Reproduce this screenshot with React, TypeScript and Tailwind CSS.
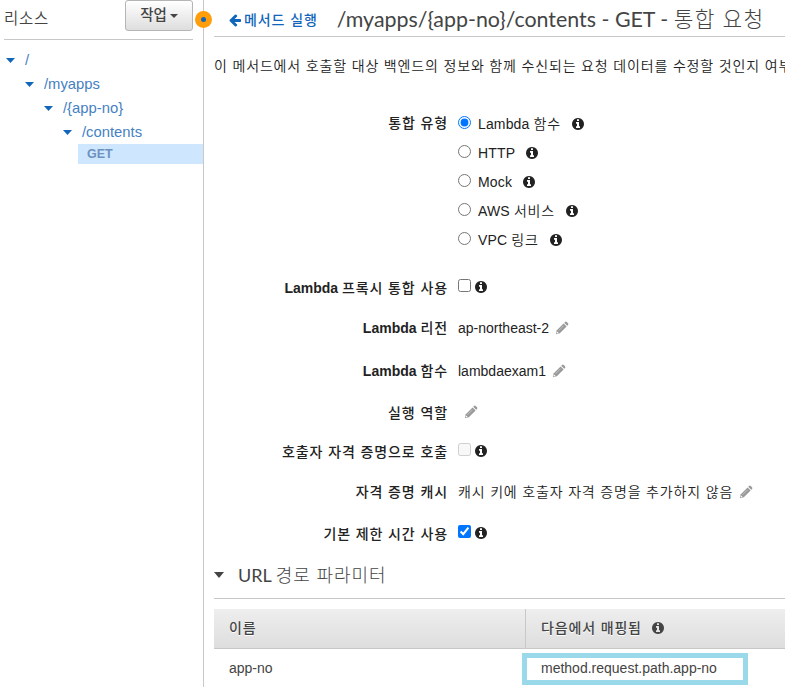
import type { ReactNode } from 'react';

const Caret = ({ className }: { className: string }) => (
  <svg viewBox="0 0 10 5" preserveAspectRatio="none" className={className} fill="currentColor">
    <path d="M0 0h10L5 5z" />
  </svg>
);

const ArrowLeft = ({ className }: { className: string }) => (
  <svg viewBox="0 0 1792 1792" className={className} fill="currentColor">
    <path d="M1664 896v128q0 53-32.5 90.5t-84.5 37.5h-704l293 294q38 36 38 90t-38 90l-75 76q-37 37-90 37-52 0-91-37l-651-652q-37-37-37-90 0-52 37-91l651-650q38-38 91-38 52 0 90 38l75 74q38 38 38 91t-38 91l-293 293h704q52 0 84.5 37.5t32.5 90.5z" />
  </svg>
);

const Info = ({ className = 'ml-[10px]' }: { className?: string }) => (
  <svg viewBox="0 0 1792 1792" className={`size-[14px] shrink-0 ${className}`} fill="currentColor">
    <path d="M1152 1376v-160q0-14-9-23t-23-9h-96v-512q0-14-9-23t-23-9h-320q-14 0-23 9t-9 23v160q0 14 9 23t23 9h96v320h-96q-14 0-23 9t-9 23v160q0 14 9 23t23 9h448q14 0 23-9t9-23zm-128-896v-160q0-14-9-23t-23-9h-192q-14 0-23 9t-9 23v160q0 14 9 23t23 9h192q14 0 23-9t9-23zm640 416q0 209-103 385.5t-279.5 279.5-385.5 103-385.5-103-279.5-279.5-103-385.5 103-385.5 279.5-279.5 385.5-103 385.5 103 279.5 279.5 103 385.5z" />
  </svg>
);

const Pencil = ({ className = 'ml-[6px]' }: { className?: string }) => (
  <svg viewBox="0 0 14 14" className={`size-[14px] shrink-0 text-[#999] ${className}`} fill="currentColor">
    <path d="M.8 13.2l1-4L8.6 2.4l3 3L4.8 12.2z" />
    <path d="M9.2 1.8l.9-.9q.8-.6 1.6.1l1.3 1.3q.7.8.1 1.6l-.9.9z" />
    <path d="M3.6 9.700l5-5" stroke="#d4d4d4" strokeWidth=".7" />
    <path d="M2.1 10.4l1.5 1.5-1.700.5-.3-.3z" fill="#fff" />
  </svg>
);

/* Hangul runs are set slightly wider than the Latin text around them. */
const Mixed = ({ text, hangul }: { text: string; hangul: string }) => (
  <span>
    {text.split(/([가-힣][가-힣 ]*)/).filter(Boolean).map((part, i) =>
      /[가-힣]/.test(part) ? <span key={i} className={hangul}>{part}</span> : part,
    )}
  </span>
);

const Row = ({ label, height, children }: { label: string; height: string; children: ReactNode }) => (
  <div className={`flex items-center ${height}`}>
    <div className="mr-[10px] w-[234px] shrink-0 text-right font-bold">
      <Mixed text={label} hangul="font-medium tracking-[0.9px]" />
    </div>
    {children}
  </div>
);

const Radio = ({ label, checked = false }: { label: string; checked?: boolean }) => (
  <label className="flex h-[29px] items-center">
    <input type="radio" name="kind" defaultChecked={checked} className="mr-[7px] mb-[3px] size-[13px]" />
    <span className="tracking-[0.15px]"><Mixed text={label} hangul="font-[350] tracking-[0.85px]" /></span>
    <Info />
  </label>
);

const Check = ({ checked = false, disabled = false }: { checked?: boolean; disabled?: boolean }) => (
  <>
    <input type="checkbox" defaultChecked={checked} disabled={disabled} className="mb-[5px] size-[13px]" />
    <Info className="mb-[2px] ml-[3px]" />
  </>
);

const TreeItem = ({ label, indent }: { label: string; indent: string }) => (
  <div className={`flex h-6 items-center text-[#4481c3] ${indent}`}>
    <Caret className="mr-[10px] h-[5px] w-[9px] text-[#1166bb]" />
    <span className="text-[14.8px]">{label}</span>
  </div>
);

export default function App() {
  return (
    <div className="flex h-[687px] w-[785px] overflow-hidden bg-white font-['Liberation_Sans','Noto_Sans_CJK_KR',sans-serif] text-sm leading-5 whitespace-nowrap text-[#222]">
      <aside className="relative w-[204px] shrink-0 border-r border-[#c8c8c8]">
        <div className="mr-[10px] ml-1 flex h-10 justify-between border-b border-[#c8c8c8] text-[#444]">
          <h2 className="pt-[9px] text-[15.5px] font-[350] tracking-[0.7px]">리소스</h2>
          <button className="flex h-[31px] w-[68px] items-center justify-center rounded-[3px] border border-[#b5b5b5] bg-linear-to-b from-white to-[#dedede] pb-[2px] text-[14.5px] font-medium">
            작업
            <Caret className="mt-[3px] ml-[3px] h-1 w-[8px]" />
          </button>
        </div>
        <div className="mt-2">
          <TreeItem label="/" indent="pl-[6px]" />
          <TreeItem label="/myapps" indent="pl-[25px]" />
          <TreeItem label="/{app-no}" indent="pl-[44px]" />
          <TreeItem label="/contents" indent="pl-[63px]" />
        </div>
        <div className="ml-[78px] flex h-5 items-center bg-[#cfe6ff] pl-[9px] text-[12.5px] font-bold text-[#6b92c0]">GET</div>
        <div className="absolute top-[11px] -right-[9px] flex size-[17px] items-center justify-center rounded-full bg-[#ff9d0b]">
          <div className="size-[5px] rounded-full bg-[#1166bb]" />
        </div>
      </aside>

      <main className="min-w-0 flex-1 overflow-hidden pl-[10px]">
        <header className="flex h-[37px] items-center border-b border-[#c8c8c8]">
          <a className="ml-[14px] flex items-center pt-1 font-medium text-[#1166bb]">
            <ArrowLeft className="mr-[2px] size-[14px]" />
            <span className="tracking-[0.9px]">메서드 실행</span>
          </a>
          <h1 className="ml-[19px] pt-[2px] font-[Lato,'Noto_Sans_CJK_KR',sans-serif] text-[21.4px] leading-7 text-[#444]">
            /myapps/&#123;app-no&#125;/contents - GET - <span className="font-light tracking-[1.2px]">통합 요청</span>
          </h1>
        </header>
        <p className="mt-[19px] h-5 font-[350] tracking-[0.84px]">이 메서드에서 호출할 대상 백엔드의 정보와 함께 수신되는 요청 데이터를 수정할 것인지 여부</p>

        <section className="mt-[33px]">
          <div className="flex">
            <div className="mr-[10px] w-[234px] shrink-0 pt-1 text-right font-medium tracking-[0.85px]">통합 유형</div>
            <div>
              <Radio label="Lambda 함수" checked />
              <Radio label="HTTP" />
              <Radio label="Mock" />
              <Radio label="AWS 서비스" />
              <Radio label="VPC 링크" />
            </div>
          </div>
          <div className="mt-[14px]">
            <Row label="Lambda 프록시 통합 사용" height="h-10"><Check /></Row>
            <Row label="Lambda 리전" height="h-10">ap-northeast-2<Pencil /></Row>
            <Row label="Lambda 함수" height="h-[46px]">lambdaexam1<Pencil /></Row>
            <Row label="실행 역할" height="h-[38px]"><Pencil className="mb-[2px] ml-[6px]" /></Row>
            <Row label="호출자 자격 증명으로 호출" height="h-10"><Check disabled /></Row>
            <Row label="자격 증명 캐시" height="h-10">
              <span className="font-[350] tracking-[0.83px]">캐시 키에 호출자 자격 증명을 추가하지 않음</span><Pencil />
            </Row>
            <Row label="기본 제한 시간 사용" height="h-[44px]"><Check checked /></Row>
          </div>
        </section>

        <h2 className="flex h-[43px] items-center border-b border-[#c8c8c8] pb-1 font-[Lato,'Noto_Sans_CJK_KR',sans-serif] text-lg text-[#444]">
          <Caret className="mr-[14px] h-[6px] w-[10px]" />
          <span>URL <span className="font-light tracking-[0.9px]">경로 파라미터</span></span>
        </h2>

        <div className="mt-[10px] text-[#444]">
          <div className="flex h-10 items-stretch border-b border-[#c8c8c8] bg-linear-to-b from-[#eee] to-[#dedede] font-medium tracking-[0.85px] [text-shadow:0_1px_0_#fff]">
            <div className="flex w-[312px] items-center border-r border-[#c8c8c8] pb-[2px] pl-[15px]">이름</div>
            <div className="flex items-center pb-[2px] pl-[15px]">다음에서 매핑됨<Info className="ml-[9px]" /></div>
          </div>
          <div className="flex h-[38px] pt-1">
            <div className="w-[308px] pt-[5px] pl-[15px]">app-no</div>
            <div className="flex h-8 w-[226px] items-center border-[5px] border-[#9ad9e9] pb-[2px] pl-[14px]">method.request.path.app-no</div>
          </div>
        </div>
      </main>
    </div>
  );
}
